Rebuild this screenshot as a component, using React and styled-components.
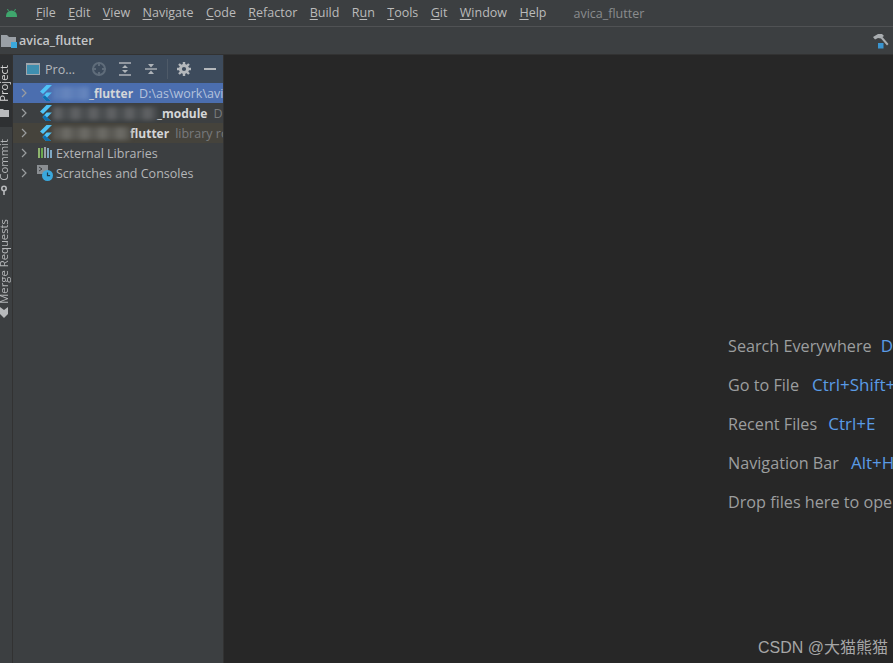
import React from "react";
import styled, { createGlobalStyle } from "styled-components";

const Global = createGlobalStyle`
  html, body, #root { margin: 0; padding: 0; height: 100%; background: #2b2b2b; }
  * { box-sizing: border-box; }
  body { font-family: "Open Sans", "Noto Sans", sans-serif; overflow: hidden; }
`;

const Shell = styled.div`
  width: 893px;
  height: 663px;
  display: flex;
  flex-direction: column;
  position: relative;
  overflow: hidden;
  background: #3c3f41;
`;

const MenuBar = styled.div`
  height: 27px;
  flex: none;
  display: flex;
  align-items: center;
  background: #3c3f41;
  border-bottom: 1px solid #505254;
  padding-left: 6px;
`;

const MenuItems = styled.div`
  display: flex;
  margin-left: 19px;
  gap: 12.4px;
`;

const MenuItem = styled.span`
  font-size: 12.5px;
  color: #bbbbbb;
  line-height: 16px;
`;

const Mnemonic = styled.span`
  text-decoration: underline;
  text-underline-offset: 2px;
`;

const WindowTitle = styled.span`
  font-size: 12.5px;
  color: #8a8c8e;
  margin-left: 27px;
`;

const NavBar = styled.div`
  height: 28px;
  flex: none;
  display: flex;
  align-items: center;
  justify-content: space-between;
  background: #3c3f41;
  padding: 0 4px 0 1px;
  border-bottom: 1px solid #323232;
`;

const Crumb = styled.div`
  display: flex;
  align-items: center;
  gap: 2px;
  font-size: 12.5px;
  font-weight: 600;
  color: #c4c6c8;
`;

const Body = styled.div`
  flex: 1;
  display: flex;
  min-height: 0;
`;

const Strip = styled.div`
  width: 13px;
  flex: none;
  display: flex;
  flex-direction: column;
  background: #3c3f41;
  border-right: 1px solid #323232;
`;

const StripTab = styled.div`
  display: flex;
  flex-direction: column;
  align-items: flex-start;
  gap: ${(p) => p.$gap}px;
  width: 12px;
  padding-top: ${(p) => p.$top}px;
  padding-bottom: ${(p) => p.$bottom}px;
  background: ${(p) => (p.$active ? "#2e3032" : "transparent")};
`;

const StripLabel = styled.span`
  writing-mode: vertical-rl;
  transform: rotate(180deg);
  font-size: 11.3px;
  line-height: 8px;
  white-space: nowrap;
  color: ${(p) => (p.$active ? "#d8d8d8" : "#b4b6b8")};
`;

const Panel = styled.div`
  width: 211px;
  flex: none;
  display: flex;
  flex-direction: column;
  background: #3c3f41;
  border-right: 1px solid #323232;
  overflow: hidden;
`;

const PanelHeader = styled.div`
  height: 28px;
  flex: none;
  display: flex;
  align-items: center;
  background: #3d4b5c;
  padding-left: 13px;
`;

const PanelTitle = styled.span`
  font-size: 12.5px;
  color: #b4b8bc;
  margin-left: 4px;
  width: 46px;
`;

const ToolButton = styled.span`
  width: 16px;
  height: 16px;
  display: flex;
  margin-right: ${(p) => p.$gap ?? 10}px;
  flex: none;
`;

const ToolSep = styled.span`
  width: 1px;
  height: 20px;
  background: #4e5a68;
  margin-right: 8px;
  margin-left: -1px;
  flex: none;
`;

const Tree = styled.div`
  display: flex;
  flex-direction: column;
`;

const Row = styled.div`
  height: 20px;
  display: flex;
  align-items: center;
  white-space: nowrap;
  overflow: hidden;
  padding-left: 7px;
  background: ${(p) => p.$bg || "transparent"};
`;

const Arrow = styled.span`
  width: 8px;
  height: 10px;
  display: flex;
  margin-right: 9px;
  flex: none;
`;

const IconSlot = styled.span`
  width: 16px;
  height: 16px;
  display: flex;
  flex: none;
  margin-right: 3px;
`;

const Blurred = styled.span`
  display: inline-block;
  flex: none;
  width: ${(p) => p.$w}px;
  height: 13px;
  margin-left: -3px;
  filter: blur(2px);
  background: repeating-linear-gradient(
    90deg,
    ${(p) => p.$color} 0 9px,
    ${(p) => p.$alt} 9px 18px
  );
`;

const Name = styled.span`
  font-size: 12px;
  font-weight: 700;
  color: #d4d6d8;
`;

const Hint = styled.span`
  font-size: 12.5px;
  margin-left: 6px;
  color: ${(p) => p.$color || "#787a7c"};
`;

const Plain = styled.span`
  font-size: 12.5px;
  color: #b4b6b8;
`;

const Editor = styled.div`
  flex: 1;
  background: #272727;
  display: flex;
  flex-direction: column;
  padding: 279px 0 0 504px;
  gap: 16px;
  overflow: hidden;
`;

const Shortcut = styled.div`
  display: flex;
  height: 23px;
  align-items: center;
  gap: ${(p) => p.$gap}px;
  white-space: nowrap;
  font-size: 16.2px;
  color: #9c9e9f;
`;

const Keys = styled.span`
  font-size: 17px;
  color: #5a9be6;
`;

const Watermark = styled.div`
  position: absolute;
  right: 5px;
  bottom: 5px;
  font-family: "Liberation Sans", "Noto Sans CJK SC", sans-serif;
  font-size: 16px;
  color: #a6a6a6;
`;

const Android = () => (
  <svg width="11" height="8" viewBox="0 0 11 8">
    <path d="M0 7a5.5 5.5 0 0 1 11 0v1H0z" fill="#3fa66d" />
    <path d="M2.5 2 1.5 0M8.5 2l1-2" stroke="#3fa66d" strokeWidth="1" />
  </svg>
);

const FolderIcon = () => (
  <svg width="16" height="16" viewBox="0 0 16 16">
    <path d="M0 2h6l2 2h7v10H0z" fill="#9aa0a6" />
    <rect x="10" y="9" width="6" height="6" fill="#3aa8dc" />
  </svg>
);

const Hammer = () => (
  <svg width="16" height="16" viewBox="0 0 16 16">
    <path d="M0 4 5 1h4l2 2-1.5 1L15.5 11 14 12.5 8 5.5 5 5 2 6.5z" fill="#a9adb0" />
    <rect x="5" y="10" width="5.5" height="5.5" fill="#3a95d0" />
  </svg>
);

const ProjectWindowIcon = () => (
  <svg width="15" height="14" viewBox="0 0 15 14">
    <rect x="0.5" y="1.5" width="13" height="11" fill="#3f8fb0" stroke="#9fa6ad" />
    <rect x="1" y="1" width="12" height="2" fill="#9fa6ad" />
  </svg>
);

const Locate = () => (
  <svg width="16" height="16" viewBox="0 0 16 16" fill="none" stroke="#5f6c7a" strokeWidth="2">
    <circle cx="8" cy="8" r="6" />
    <path d="M8 1v4M8 11v4M1 8h4M11 8h4" />
  </svg>
);

const ExpandAll = () => (
  <svg width="16" height="16" viewBox="0 0 16 16">
    <path d="M2 2h12M2 14h12" stroke="#aeb3b8" strokeWidth="1.4" />
    <path d="M8 4l3 3H5zM8 12l3-3H5z" fill="#aeb3b8" />
  </svg>
);

const CollapseAll = () => (
  <svg width="16" height="16" viewBox="0 0 16 16">
    <path d="M2 8h12" stroke="#aeb3b8" strokeWidth="1.4" />
    <path d="M8 6.5l3-3.5H5zM8 9.5l3 3.5H5z" fill="#aeb3b8" />
  </svg>
);

const Gear = () => (
  <svg width="16" height="16" viewBox="0 0 16 16" fill="none" stroke="#b4b8bc">
    <circle cx="8" cy="8" r="3.6" strokeWidth="3" />
    <path d="M8 1v3M8 12v3M1 8h3M12 8h3M3 3l2 2M11 11l2 2M3 13l2-2M11 5l2-2" strokeWidth="2.4" />
  </svg>
);

const Minimize = () => (
  <svg width="16" height="16" viewBox="0 0 16 16">
    <rect x="2" y="7" width="12" height="2" fill="#b4b8bc" />
  </svg>
);

const Chevron = () => (
  <svg width="8" height="10" viewBox="0 0 8 10" fill="none" stroke="#9a9d9f" strokeWidth="1.2">
    <path d="M2 1l4 4-4 4" />
  </svg>
);

const Flutter = () => (
  <svg width="16" height="16" viewBox="0 0 16 16">
    <path d="M9.5 0H15L6 9 3 6.5z" fill="#4fc3f7" />
    <path d="M9.5 7.5H15L10 12.5l4 3.5H9L5.5 12z" fill="#4fc3f7" />
    <path d="M7.8 10.2 10 12.5l4 3.5H9L5.5 12z" fill="#0d6fb0" />
  </svg>
);

const Libraries = () => (
  <svg width="16" height="16" viewBox="0 0 16 16">
    <rect x="1" y="3" width="2" height="10" fill="#8fb46e" />
    <rect x="4" y="3" width="2" height="10" fill="#6aa84f" />
    <rect x="7" y="2" width="2" height="11" fill="#9aa0a6" />
    <rect x="10" y="3" width="2" height="10" fill="#7fa8c4" />
    <rect x="13" y="5" width="2" height="8" fill="#7fa8c4" />
  </svg>
);

const Scratches = () => (
  <svg width="16" height="16" viewBox="0 0 16 16">
    <rect x="0" y="0" width="11" height="9" fill="#8a8e92" />
    <path d="M2 2l3 2-3 2" stroke="#3c3f41" fill="none" />
    <circle cx="10.5" cy="10.5" r="5.5" fill="#3aa8dc" />
    <path d="M10.5 7.5v3.2h2.6" stroke="#1d3b4d" fill="none" strokeWidth="1.2" />
  </svg>
);

const SmallFolder = () => (
  <svg width="9" height="10" viewBox="0 0 9 10">
    <path d="M0 1h3l1 1h5v7H0z" fill="#b8babc" />
  </svg>
);

const Key = () => (
  <svg width="9" height="10" viewBox="0 0 9 10" fill="none" stroke="#b8babc" strokeWidth="1.6">
    <circle cx="4" cy="3.5" r="2.2" />
    <path d="M4 6v4" />
  </svg>
);

const Mr = () => (
  <svg width="9" height="13" viewBox="0 0 9 13">
    <path d="M0 1l4 3 4-3v7l-4 4-4-4z" fill="#b8babc" />
  </svg>
);

const menu = [
  ["F", "ile"],
  ["E", "dit"],
  ["V", "iew"],
  ["N", "avigate"],
  ["C", "ode"],
  ["R", "efactor"],
  ["B", "uild"],
  ["R", "un", "u"],
  ["T", "ools"],
  ["G", "it"],
  ["W", "indow"],
  ["H", "elp"],
];

const shortcuts = [
  ["Search Everywhere", "Double Shift", 9],
  ["Go to File", "Ctrl+Shift+N", 13],
  ["Recent Files", "Ctrl+E", 11],
  ["Navigation Bar", "Alt+Home", 12],
  ["Drop files here to open", "", 0],
];

const App = () => {
  return (
    <Shell>
      <Global />
      <MenuBar>
        <Android />
        <MenuItems>
          {menu.map(([first, rest, alt]) => (
            <MenuItem key={first + rest}>
              {alt ? (
                <>
                  R<Mnemonic>u</Mnemonic>n
                </>
              ) : (
                <>
                  <Mnemonic>{first}</Mnemonic>
                  {rest}
                </>
              )}
            </MenuItem>
          ))}
        </MenuItems>
        <WindowTitle>avica_flutter</WindowTitle>
      </MenuBar>
      <NavBar>
        <Crumb>
          <FolderIcon />
          avica_flutter
        </Crumb>
        <Hammer />
      </NavBar>
      <Body>
        <Strip>
          <StripTab $active $top={10} $bottom={9} $gap={6}>
            <StripLabel $active>Project</StripLabel>
            <SmallFolder />
          </StripTab>
          <StripTab $top={12} $bottom={0} $gap={4}>
            <StripLabel>Commit</StripLabel>
            <Key />
          </StripTab>
          <StripTab $top={24} $bottom={0} $gap={3}>
            <StripLabel>Merge Requests</StripLabel>
            <Mr />
          </StripTab>
        </Strip>
        <Panel>
          <PanelHeader>
            <ProjectWindowIcon />
            <PanelTitle>Pro...</PanelTitle>
            <ToolButton>
              <Locate />
            </ToolButton>
            <ToolButton>
              <ExpandAll />
            </ToolButton>
            <ToolButton $gap={9}>
              <CollapseAll />
            </ToolButton>
            <ToolSep />
            <ToolButton $gap={10}>
              <Gear />
            </ToolButton>
            <ToolButton $gap={0}>
              <Minimize />
            </ToolButton>
          </PanelHeader>
          <Tree>
            <Row $bg="#4b6eaf">
              <Arrow>
                <Chevron />
              </Arrow>
              <IconSlot>
                <Flutter />
              </IconSlot>
              <Blurred $w={36} $color="#5c7db8" $alt="#6484bc" />
              <Name>_flutter</Name>
              <Hint $color="#b4c2dc">D:\as\work\avica_flutter</Hint>
            </Row>
            <Row>
              <Arrow>
                <Chevron />
              </Arrow>
              <IconSlot>
                <Flutter />
              </IconSlot>
              <Blurred $w={104} $color="#5e6062" $alt="#4c4f51" />
              <Name>_module</Name>
              <Hint>D:\as\work</Hint>
            </Row>
            <Row $bg="#45433c">
              <Arrow>
                <Chevron />
              </Arrow>
              <IconSlot>
                <Flutter />
              </IconSlot>
              <Blurred $w={77} $color="#5b5a55" $alt="#6a6964" />
              <Name>flutter</Name>
              <Hint>library root</Hint>
            </Row>
            <Row>
              <Arrow>
                <Chevron />
              </Arrow>
              <IconSlot>
                <Libraries />
              </IconSlot>
              <Plain>External Libraries</Plain>
            </Row>
            <Row>
              <Arrow>
                <Chevron />
              </Arrow>
              <IconSlot>
                <Scratches />
              </IconSlot>
              <Plain>Scratches and Consoles</Plain>
            </Row>
          </Tree>
        </Panel>
        <Editor>
          {shortcuts.map(([label, keys, gap]) => (
            <Shortcut key={label} $gap={gap}>
              <span>{label}</span>
              {keys && <Keys>{keys}</Keys>}
            </Shortcut>
          ))}
        </Editor>
      </Body>
      <Watermark>CSDN @大猫熊猫</Watermark>
    </Shell>
  );
};

export default App;
